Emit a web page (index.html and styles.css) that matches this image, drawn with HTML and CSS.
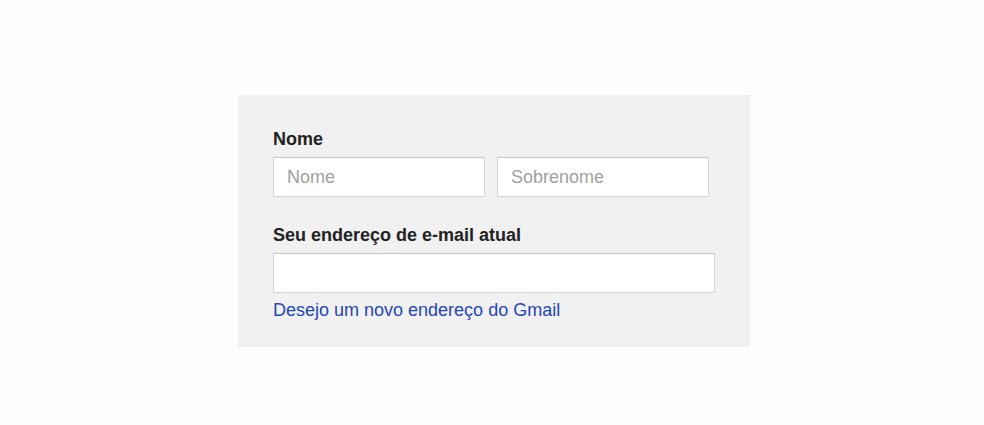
FILE: index.html
```html
<!DOCTYPE html>
<html lang="pt-BR">
<head>
    <meta charset="UTF-8">
    <title>Criar conta</title>
    <link rel="stylesheet" href="styles.css">
</head>
<body>

    <!-- Signup form box -->
    <form class="signup">
        <label class="field-label">Nome</label>
        <div class="name-row">
            <input type="text" placeholder="Nome">
            <input type="text" placeholder="Sobrenome">
        </div>

        <label class="field-label">Seu endereço de e-mail atual</label>
        <input type="text" class="email">
        <a href="#" class="gmail-link">Desejo um novo endereço do Gmail</a>
    </form>

</body>
</html>
```

FILE: styles.css
```css
body {
    font-family: "Liberation Sans", Arial, sans-serif;
    margin: 0;
    padding: 95px 0 0 238px;
    background-color: #fdfdfd;
}
.signup {
    width: 442px;
    padding: 34px 35px 26px 35px;
    background-color: #f1f1f1;
    display: flex;
    flex-direction: column;
}
.field-label {
    font-size: 18px;
    line-height: 21px;
    font-weight: bold;
    color: #222;
    margin-bottom: 7px;
}
.name-row {
    display: flex;
    gap: 12px;
    margin-bottom: 28px;
}
.name-row input {
    width: 212px;
}
input {
    box-sizing: border-box;
    height: 40px;
    padding: 0 13px;
    border: 1px solid #d6d6d6;
    border-top-color: #c8c8c8;
    background: white;
    font-family: inherit;
    font-size: 18px;
    color: #222;
    outline: none;
}
input::placeholder {
    color: #a0a0a0;
}
.email {
    width: 442px;
}
.gmail-link {
    margin-top: 7px;
    font-size: 18px;
    line-height: 21px;
    color: #2346b8;
    text-decoration: none;
}
```
